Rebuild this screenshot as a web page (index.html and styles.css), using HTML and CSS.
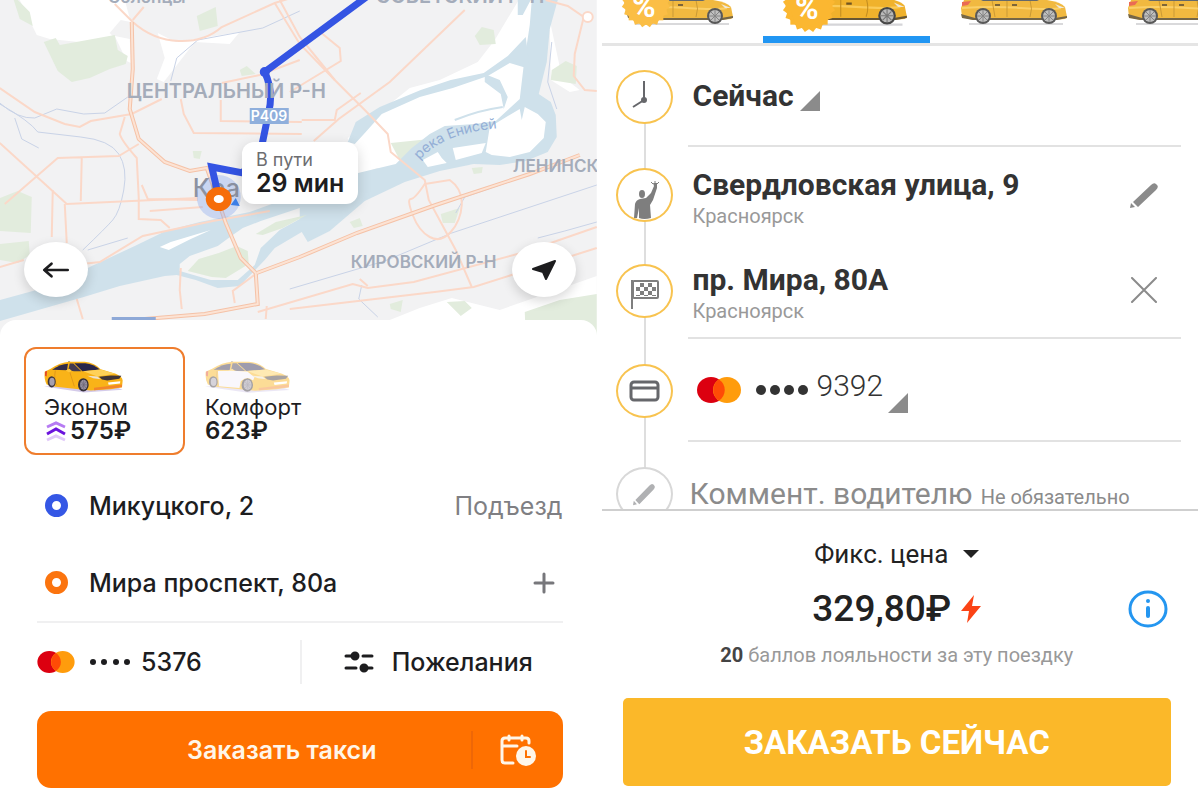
FILE: index.html
```html
<!DOCTYPE html>
<html lang="ru">

<head>
    <meta charset="UTF-8">
    <meta name="viewport" content="width=device-width, initial-scale=1.0">
    <title>Заказ такси</title>
    <link rel="stylesheet" href="styles.css">
</head>

<body>

    <!-- shared drawings -->
    <svg class="sprite" aria-hidden="true">
        <symbol id="mastercard" viewBox="0 0 44 26">
            <ellipse cx="14" cy="13" rx="14" ry="13" fill="#dc0010" />
            <ellipse cx="30" cy="13" rx="14" ry="13" fill="#ff9c0c" />
            <path d="M22 2.500A14 13 0 0 1 22 23.500A14 13 0 0 1 22 2.500Z" fill="#ff4b06" />
        </symbol>
        <symbol id="pencil" viewBox="0 0 28 28">
            <path d="M0 27 1 22 5 26Z" />
            <path d="M3 21 21 4Q24 1 26 3L27 4Q29 6 26 9L8 26Z" />
        </symbol>
        <symbol id="side-car" viewBox="0 0 107 28">
            <path d="M8 24H102" stroke="#d5d5d8" stroke-width="2" />
            <path d="M3 0H86Q100 2 104 7L106 17 104 19 92 20H12L1 17 0 8Z" fill="#f0b22c" />
            <path d="M1 8Q30 6 60 8T100 8" fill="none" stroke="#fbcb58" stroke-width="2" />
            <path d="M0 14 14 18H94L106 16V18L96 20H12L1 18Z" fill="#675633" />
            <path d="M31 0 34 17M69 0Q72 9 69 17M46 0V17" fill="none" stroke="#c58f20" />
            <path d="M20 0H78L76 1H22Z" fill="#55595c" />
            <path d="M34 5H39M51 5H56" stroke="#705523" stroke-width="2" />
            <path d="M1 2 10 1 7 5 1 6Z" fill="#e85c42" />
            <path d="M94 4 104 8 98 8Z" fill="#eee7d8" />
            <circle cx="22" cy="16" r="8" fill="#484848" />
            <circle cx="22" cy="16" r="6" fill="#b9b9b9" />
            <path d="M22 10V22M16 16H28M18 12 26 20M26 12 18 20" stroke="#777" />
            <circle cx="88" cy="16" r="8" fill="#484848" />
            <circle cx="88" cy="16" r="6" fill="#b9b9b9" />
            <path d="M88 10V22M82 16H94M84 12 92 20M92 12 84 20" stroke="#777" />
        </symbol>
        <symbol id="badge" viewBox="-24 -24 48 48">
            <g fill="#fbb731">
                <circle r="20" />
                <rect x="-16" y="-16" width="32" height="32" />
                <rect x="-16" y="-16" width="32" height="32" transform="rotate(18)" />
                <rect x="-16" y="-16" width="32" height="32" transform="rotate(36)" />
                <rect x="-16" y="-16" width="32" height="32" transform="rotate(54)" />
                <rect x="-16" y="-16" width="32" height="32" transform="rotate(72)" />
            </g>
        </symbol>
        <symbol id="taxi" viewBox="0 0 240 95">
            <path d="M0 76 120 94 236 86 190 68Z" fill="#d4cbea" />
            <path d="M2 32 20 23Q48 4 76 2L122 2Q150 4 170 24L215 38Q235 46 236 58L234 78 200 84 140 88 35 77 8 70Q0 56 2 32Z" fill="#f9b318" />
            <path d="M3 32 9 29 8 46 3 44Z" fill="#e44725" />
            <path d="M24 26Q50 8 72 8L69 27Z" fill="#312b49" />
            <path d="M77 7 88 7 112 30 90 30 73 27Z" fill="#443b50" />
            <path d="M91 6 124 6Q149 9 168 25L115 30Z" fill="#29264b" />
            <path d="M118 30 170 25 213 38 160 46Z" fill="#ffd158" />
            <path d="M165 47 200 43 232 44 226 53 190 58 174 55Z" fill="#413536" />
            <path d="M130 44 160 46 170 54 148 51Z" fill="#eee3d0" />
            <path d="M192 64 229 60 228 67 194 71Z" fill="#fff" />
            <path d="M150 80 234 70 234 78 150 87Z" fill="#f3852a" />
            <path d="M34 28Q29 57 38 72M76 28 91 76" fill="none" stroke="#d58a18" stroke-width="2" />
            <path d="M65 28 76 23 83 29 76 34Z" fill="#ffc53b" />
            <path d="M72 2 74-3 79 2Z" fill="#8f8370" />
            <ellipse cx="23" cy="62" rx="12" ry="17" fill="#3b343a" />
            <ellipse cx="24" cy="62" rx="8" ry="12" fill="#a69fae" />
            <ellipse cx="118" cy="71" rx="16" ry="20" fill="#342f38" />
            <ellipse cx="119" cy="71" rx="11" ry="15" fill="#9790a0" />
            <path d="M119 57V85M109 71H129M112 61 126 81M126 61 112 81" stroke="#6c6575" stroke-width="2" />
        </symbol>
    </svg>

    <main class="screens">

        <section class="app city">
            <div class="map">
                <svg class="map-canvas" viewBox="0 0 597 336" preserveAspectRatio="xMidYMin slice" aria-label="Карта">
                    <rect width="597" height="336" fill="#f2f2f3" />
                    <g fill="#fff">
                        <path d="M20 0H125L131 22 121 20 110 33 114 37 79 42 50 39 37 35Z" />
                        <path d="M115 36 130 39 131 63 127 61Z" />
                        <path d="M158 33 176 42 240 32 230 44 195 42 164 82 157 79 165 58Z" />
                        <path d="M519 0 495 40 478 62 440 80 410 88 384 109 350 142 355 165 400 171 460 166 500 160 547 140 548 110 530 95 536 0Z" />
                        <path d="M550 20 551 80 570 92 580 90 562 76Z" />
                        <path d="M390 320 420 308 452 298 500 310 540 296 597 276V336H390Z" />
                        <path d="M348 138 370 122 404 140 402 160 356 175Z" />
                    </g>
                    <g fill="#e2ecdd">
                        <path d="M44 42 56 38 60 45 115 35 118 50 128 56 126 64 110 69 90 78 72 82 58 71Z" />
                        <path d="M18 0 30 12 33 26 20 19 14 0Z" />
                        <path d="M197 16 216 7 218 26 200 31Z" />
                        <path d="M240 70 247 66 256 74 242 76Z" />
                        <path d="M193 151 202 151 200 159 194 158Z" />
                        <path d="M0 198 18 191 32 197 31 233 0 231Z" />
                        <path d="M0 244 29 241 30 255 18 263 0 260Z" />
                        <path d="M475 36 482 27 494 30 496 44 480 45Z" />
                        <path d="M552 70 566 61 577 66 576 84 551 80Z" />
                        <path d="M391 143 430 139 417 161 402 164Z" />
                        <path d="M441 214 460 208 455 223 443 223Z" />
                        <path d="M447 302 465 301 472 308 461 316Z" />
                        <path d="M525 312 560 300 597 294V336H526Z" />
                        <path d="M390 304 403 300 401 312 391 309Z" />
                        <path d="M472 168 483 167 482 173 474 174ZM350 222 360 218 363 226 354 228Z" />
                    </g>

                    <!-- Yenisei -->
                    <g fill="#cfe1eb">
                        <path d="M0 300 55 285 92 266 135 246 166 231 200 222 250 212 310 190 350 175 396 164 412 148 430 134 445 126 475 124 496 121 520 99 524 65 530 25 532 0H558L550 29 547 62 539 94 551 102 556 115 557 137 548 152 526 161 500 165 474 164 440 171 405 182 365 201 330 231 308 242 302 232 275 248 265 260 240 286 218 288 196 280 177 275 165 276 120 286 84 297 0 321Z" />
                        <path d="M348 142 356 122 380 107 421 90 451 80 484 73 508 56 526 37 530 69 510 63 488 76 453 88 420 97 382 114 366 132 355 144Z" />
                        <path d="M485 74 500 80 508 97 504 109 501 94 485 82Z" />
                        <path d="M441 150 452 144 451 161 447 159Z" />
                        <path d="M518 0 531 0 523 15 518 15Z" />
                    </g>
                    <g fill="#fff">
                        <path d="M423 160 438 152 442 158 447 163 428 167Z" />
                        <path d="M453 148 486 143 482 153 456 160Z" />
                        <path d="M490 127 520 109 522 120 525 107 538 114 546 122 544 138 530 152 510 157 492 155 486 152Z" />
                        <path d="M171 242 211 230 191 239 169 250 160 247Z" />
                    </g>
                    <path d="M180 264 190 256 218 246 233 235 243 228 261 221 300 208 300 219 280 230 261 248 255 265 238 280 211 280 180 271Z" fill="#f5f5f5" />
                    <path d="M188 271 199 259 219 253 237 246 248 251 249 264 226 278 212 277ZM256 234 276 222 307 215 283 228 263 235Z" fill="#e0ebdb" />
                    <path d="M455 120Q480 110 503 107" fill="none" stroke="#cfe1eb" stroke-width="2" />

                    <!-- railways and streams -->
                    <g fill="none" stroke="#c9d3e7">
                        <path d="M0 103Q18 119 35 118L57 109 84 114 105 113 128 97" />
                        <path d="M0 104Q30 121 38 132L81 137Q110 140 119 154T124 190 113 220 83 250" />
                        <path d="M15 118 22 139 39 148M171 81 177 58 198 40 263 28 300 11M456 213 465 197 512 181" />
                        <path d="M290 289 385 261 452 233 597 185M88 250 128 238M362 285 359 299 378 317" />
                        <path d="M552 42 548 82 557 109M538 238 565 231 597 222" />
                    </g>

                    <!-- roads -->
                    <g fill="none" stroke="#fbd8c8" stroke-width="2">
                        <path d="M115 4 133 22Q153 40 179 41T222 27L275 3 350-20M133 20 144 7M275 3 300 44 335 80 366 111 388 134 391 152 425 180 429 200 456 250 472 287" />
                        <path d="M0 88 35 112 65 124 80 127 91 121 132 114 162 99M0 143 55 193 67 204 198 198M5 204 58 158 119 156 139 144M82 158 81 201M53 190 52 237M65 204 67 243" />
                        <path d="M125 117 120 134Q122 141 137 158L139 198V219L161 220 170 228M142 185 148 199 198 200M150 211 203 207M181 99 184 114 194 133 302 134M221 100 221 121 302 122M222 83 260 75 300 60" />
                        <path d="M280 0 300 37 335 80M318 30 340 48 341 61 290 92M465 10 390 82 339 119 314 141M302 120H335L337 110 361 93" />
                        <path d="M56 267 100 262 143 236 213 221 270 211M181 268 180 290 182 309M0 267 24 260M77 299 83 319M235 303 233 291 256 274M267 306 266 319" />
                        <path d="M425 184 450 180Q463 189 462 205T451 232 430 237 413 215 411 199 425 184ZM258 312 353 284 368 288 414 282 525 252 597 227M290 309 435 292 474 287 597 248M368 286 360 279" />
                        <path d="M546 0 568 6 584 17 575 54 574 76 585 90 597 91" />
                    </g>
                    <g fill="none" stroke="#f5c2a7" stroke-width="4">
                        <path d="M132 22 133 69 130 109 139 139 165 162 190 171 207 168 214 188 226 223 241 258 256 273 258 304 205 314 145 319" />
                        <path d="M257 273 300 257 357 233 436 205 530 174 580 155" />
                    </g>
                    <g fill="none" stroke="#fce3d4" stroke-width="2">
                        <path d="M132 22 133 69 130 109 139 139 165 162 190 171 207 168 214 188 226 223 241 258 256 273 258 304 205 314 145 319" />
                        <path d="M257 273 300 257 357 233 436 205 530 174 580 155" />
                    </g>
                    <circle cx="588" cy="17" r="5" fill="#fff" stroke="#fbd8c8" stroke-width="2" />
                    <rect x="112" y="317" width="44" height="5" fill="#8ea9d7" />

                    <circle cx="219" cy="197" r="22" fill="#6c94f0" fill-opacity=".3" />
                    <g class="map-labels">
                        <text x="108" y="3" class="town">Солонцы</text>
                        <text x="376" y="3" class="soviet">СОВЕТСКИЙ Р-Н</text>
                        <text x="351" y="268">КИРОВСКИЙ Р-Н</text>
                        <text x="513" y="172">ЛЕНИНСК</text>
                        <text x="193" y="197" class="capital">Кра</text>
                        <path id="river-line" d="M420 160Q443 133 500 128" fill="none" />
                        <text class="river"><textPath href="#river-line">река Енисей</textPath></text>
                    </g>

                    <!-- route -->
                    <path d="M368-4 265 72Q274 92 269 112L262 146 243 173 212 167 219 197" fill="none" stroke="#3454e3" stroke-width="7" />
                    <circle cx="265" cy="72" r="5" fill="#3454e3" />
                    <g class="map-labels">
                        <text x="127" y="98" class="district">ЦЕНТРАЛЬНЫЙ Р-Н</text>
                    </g>
                    <rect x="250" y="108" width="39" height="16" fill="#8fafdc" />
                    <text x="251" y="121" class="road-sign">Р409</text>
                    <path d="M231 205 236 198 240 206Z" fill="#3c7fe9" />
                    <ellipse cx="219" cy="199" rx="9" ry="8" fill="#fff" stroke="#f66d0a" stroke-width="8" />
                </svg>

                <div class="eta">
                    <span>В пути</span>
                    <strong>29 мин</strong>
                </div>
                <button class="map-button back" aria-label="Назад">
                    <svg width="28" height="18" viewBox="0 0 30 20" fill="none" stroke="#1d1d1f" stroke-width="3" stroke-linecap="round" stroke-linejoin="round">
                        <path d="M28 10H2M10 3 2 10 10 17" />
                    </svg>
                </button>
                <button class="map-button locate" aria-label="Моё местоположение">
                    <svg width="24" height="20" viewBox="0 0 24 20" fill="#1d1d1f" stroke="#1d1d1f" stroke-width="2" stroke-linejoin="round">
                        <path d="M1 9 23 1 14 19 11 12Z" />
                    </svg>
                </button>
            </div>

            <div class="sheet">
                <div class="tariffs">
                    <button class="tariff selected">
                        <svg class="taxi"><use href="#taxi" /></svg>
                        <span class="tariff-name">Эконом</span>
                        <span class="tariff-price">
                            <svg width="24" height="22" viewBox="0 0 24 22" fill="none" stroke-width="3">
                                <path d="M3 7 12 3 21 7" stroke="#b67bf3" />
                                <path d="M3 14 12 9 21 14" stroke="#6b13dd" />
                                <path d="M3 20 12 16 21 20" stroke="#e1c9fa" />
                            </svg>
                            575₽
                        </span>
                    </button>
                    <button class="tariff">
                        <svg class="taxi faded" viewBox="0 0 240 95" preserveAspectRatio="none">
                            <use href="#taxi" width="240" height="95" />
                            <path d="M36 30 74 29 118 31 138 48 134 58Q119 42 100 60L96 80 39 75Z" fill="#f3effa" />
                        </svg>
                        <span class="tariff-name">Комфорт</span>
                        <span class="tariff-price">623₽</span>
                    </button>
                </div>

                <div class="address">
                    <span class="dot from"></span>
                    <input type="text" value="Микуцкого, 2" aria-label="Откуда">
                    <button class="entrance">Подъезд</button>
                </div>
                <div class="address">
                    <span class="dot to"></span>
                    <input type="text" value="Мира проспект, 80а" aria-label="Куда">
                    <button class="add" aria-label="Добавить адрес">
                        <svg width="22" height="22" viewBox="0 0 22 22" stroke="#77777b" stroke-width="3" stroke-linecap="round">
                            <path d="M11 2V20M2 11H20" />
                        </svg>
                    </button>
                </div>

                <div class="options">
                    <button class="option card">
                        <svg width="38" height="22"><use href="#mastercard" /></svg>
                        <svg width="42" height="8" viewBox="0 0 42 8" fill="#1d1d1f">
                            <circle cx="4" cy="4" r="3" /><circle cx="15" cy="4" r="3" /><circle cx="27" cy="4" r="3" /><circle cx="38" cy="4" r="3" />
                        </svg>
                        <span>5376</span>
                    </button>
                    <button class="option wishes">
                        <svg width="30" height="22" viewBox="0 0 30 22" fill="#1d1d1f" stroke="#1d1d1f" stroke-width="3" stroke-linecap="round">
                            <path d="M2 5H10M19 5H28M2 17H12M20 17H28" />
                            <circle cx="11" cy="5" r="3" /><circle cx="20" cy="17" r="3" />
                        </svg>
                        <span>Пожелания</span>
                    </button>
                </div>

                <div class="order">
                    <button class="order-now">Заказать такси</button>
                    <button class="order-later" aria-label="Заказать на время">
                        <svg width="36" height="32" viewBox="0 0 36 32" fill="none" stroke="#fff6e9" stroke-width="3" stroke-linecap="round">
                            <path d="M29 9V7Q29 4 26 4H5Q2 4 2 7V26Q2 29 5 29H13M2 12H17M9 2V6M22 2V6" />
                            <circle cx="26" cy="22" r="10" fill="#fff6e9" stroke="none" />
                            <path d="M26 17V23H30" stroke="#ff7100" stroke-width="2" />
                        </svg>
                    </button>
                </div>
            </div>
        </section>

        <section class="app maxim">
            <nav class="classes">
                <button class="class" aria-label="Эконом">
                    <svg viewBox="0 0 167 36">
                        <use href="#side-car" x="31" y="0" width="107" height="28" />
                        <use href="#badge" x="24" y="-23" width="52" height="52" />
                        <text x="36" y="17" class="percent">%</text>
                    </svg>
                </button>
                <button class="class active" aria-label="Комфорт">
                    <svg viewBox="0 0 167 36">
                        <use href="#side-car" x="27" y="-2" width="118" height="31" />
                        <use href="#badge" x="18" y="-22" width="56" height="56" />
                        <text x="32" y="19" class="percent">%</text>
                    </svg>
                </button>
                <button class="class" aria-label="Бизнес">
                    <svg viewBox="0 0 167 36"><use href="#side-car" x="31" y="0" width="107" height="28" /></svg>
                </button>
                <button class="class" aria-label="Универсал">
                    <svg viewBox="0 0 167 36"><use href="#side-car" x="31" y="0" width="107" height="28" /></svg>
                </button>
            </nav>

            <div class="steps">
                <div class="step">
                    <span class="step-icon">
                        <svg width="44" height="44" viewBox="0 0 44 44" fill="none" stroke="#66676b" stroke-width="2">
                            <path d="M22 6V25L11 32" />
                            <circle cx="22" cy="25" r="2" fill="#66676b" />
                        </svg>
                    </span>
                    <div class="step-body line">
                        <select class="when" aria-label="Время подачи">
                            <option>Сейчас</option>
                        </select>
                        <svg class="corner" width="20" height="20"><path d="M20 0V20H0Z" fill="#8b8b8b" /></svg>
                    </div>
                </div>

                <div class="step">
                    <span class="step-icon">
                        <svg width="44" height="52" viewBox="0 0 44 52" fill="#7e7e7e">
                            <ellipse cx="20" cy="25" rx="3" ry="4" />
                            <path d="M12 49 13 35Q14 31 18 30L24 29 29 24 32 17 31 14 35 14 35 19 31 31 28 36 29 49Q22 51 17 49L17 39 15 49Z" />
                            <path d="M31 15 29 13M33 15V12M35 15 37 13" stroke="#7e7e7e" />
                        </svg>
                    </span>
                    <div class="step-body">
                        <div class="place">
                            <strong>Свердловская улица, 9</strong>
                            <span>Красноярск</span>
                        </div>
                        <button class="step-action" aria-label="Изменить адрес">
                            <svg width="28" height="28" fill="#8b8b8b"><use href="#pencil" /></svg>
                        </button>
                    </div>
                </div>

                <div class="step">
                    <span class="step-icon">
                        <svg width="44" height="44" viewBox="0 0 44 44" fill="#7e7e7e">
                            <path d="M9 11H11V40H9Z" />
                            <rect x="11" y="12" width="25" height="17" rx="1" fill="none" stroke="#7e7e7e" stroke-width="2" />
                            <path d="M18 14H22V18H18ZM26 14H30V18H26ZM14 18H18V22H14ZM22 18H26V22H22ZM30 18H34V22H30ZM18 22H22V26H18ZM26 22H30V26H26ZM14 26H18V27H14ZM22 26H26V27H22ZM30 26H34V27H30Z" />
                        </svg>
                    </span>
                    <div class="step-body line">
                        <div class="place">
                            <strong>пр. Мира, 80А</strong>
                            <span>Красноярск</span>
                        </div>
                        <button class="step-action" aria-label="Удалить адрес">
                            <svg width="28" height="26" viewBox="0 0 28 26" stroke="#8b8b8b" stroke-width="2" stroke-linecap="round">
                                <path d="M2 1 26 25M26 1 2 25" />
                            </svg>
                        </button>
                    </div>
                </div>

                <div class="step">
                    <span class="step-icon">
                        <svg width="44" height="44" viewBox="0 0 44 44" fill="none" stroke="#66676b" stroke-width="3">
                            <rect x="9" y="13" width="27" height="18" rx="3" />
                            <path d="M9 19H36" />
                        </svg>
                    </span>
                    <div class="step-body line">
                        <button class="payment">
                            <svg width="44" height="26"><use href="#mastercard" /></svg>
                            <svg width="54" height="12" viewBox="0 0 54 12" fill="#333">
                                <circle cx="6" cy="6" r="5" /><circle cx="20" cy="6" r="5" /><circle cx="34" cy="6" r="5" /><circle cx="48" cy="6" r="5" />
                            </svg>
                            <span>9392</span>
                        </button>
                        <svg class="corner low" width="20" height="20"><path d="M20 0V20H0Z" fill="#8b8b8b" /></svg>
                    </div>
                </div>

                <div class="step">
                    <span class="step-icon muted">
                        <svg width="22" height="24" viewBox="0 0 28 28" preserveAspectRatio="none" fill="#b0b1b3"><use href="#pencil" width="28" height="28" /></svg>
                    </span>
                    <div class="step-body comment">
                        <label for="comment">Коммент. водителю</label>
                        <input type="text" id="comment" placeholder="Не обязательно">
                    </div>
                </div>
            </div>

            <div class="total">
                <div class="price-kind">
                    <select aria-label="Тип цены">
                        <option>Фикс. цена</option>
                    </select>
                    <svg width="16" height="8"><path d="M0 0H16L8 8Z" fill="#222" /></svg>
                </div>
                <div class="price-row">
                    <p class="price">
                        329,80₽
                        <svg width="20" height="28" viewBox="0 0 20 28"><path d="M13 0 0 16H8L6 28 20 11H11Z" fill="#fb4315" /></svg>
                    </p>
                    <button class="info" aria-label="О цене">
                        <svg width="40" height="38" viewBox="0 0 40 38" fill="none" stroke="#2496f0">
                            <ellipse cx="20" cy="19" rx="18" ry="17" stroke-width="3" />
                            <path d="M20 18V26" stroke-width="4" stroke-linecap="round" />
                            <circle cx="20" cy="11" r="2" fill="#2496f0" stroke="none" />
                        </svg>
                    </button>
                </div>
                <p class="bonus"><b>20</b> баллов лояльности за эту поездку</p>
                <button class="submit">ЗАКАЗАТЬ СЕЙЧАС</button>
            </div>
        </section>

    </main>

</body>

</html>
```

FILE: styles.css
```css
* {
    box-sizing: border-box;
}

body {
    margin: 0;
    background-color: #fff;
    color: #1d1d1f;
    font-family: Inter, sans-serif;
}

button,
input,
select {
    font: inherit;
    color: inherit;
    background: none;
    border: none;
    padding: 0;
    margin: 0;
}

button {
    cursor: pointer;
}

select {
    appearance: none;
}

p {
    margin: 0;
}

svg {
    flex-shrink: 0;
}

.sprite {
    position: absolute;
    width: 0;
    height: 0;
}

.screens {
    display: grid;
    grid-template-columns: 1fr 1fr;
    gap: 5px;
    min-height: 100vh;
    padding-right: 2px;
}

.app {
    display: flex;
    flex-direction: column;
    min-width: 0;
}

/* left screen */

.map {
    position: relative;
    height: 336px;
    overflow: hidden;
}

.map-canvas {
    display: block;
    width: 100%;
    height: 100%;
}

.map-labels {
    fill: #a4acba;
    font-size: 17px;
    font-weight: 600;
}

.map-labels .soviet {
    font-size: 20px;
}

.map-labels .district {
    font-size: 20px;
}

.map-labels .capital {
    fill: #8c92a2;
    font-size: 25px;
    font-weight: 500;
}

.map-labels .river {
    fill: #93aed6;
    font-size: 14px;
    font-weight: 400;
}

.road-sign {
    fill: #fff;
    font-size: 14px;
    font-weight: 600;
}

.eta {
    position: absolute;
    top: 142px;
    left: 242px;
    display: flex;
    flex-direction: column;
    padding: 8px 14px;
    border-radius: 12px;
    background-color: #fff;
    box-shadow: 0 4px 14px rgba(0, 0, 0, 0.16);
    font-size: 18px;
    line-height: 20px;
    color: #6d6d70;
}

.eta strong {
    font-size: 25px;
    font-weight: 600;
    line-height: 26px;
    color: #1d1d1f;
}

.map-button {
    position: absolute;
    top: 242px;
    display: flex;
    align-items: center;
    justify-content: center;
    width: 64px;
    height: 55px;
    border-radius: 50%;
    background-color: #fff;
    box-shadow: 0 4px 12px rgba(0, 0, 0, 0.16);
}

.back {
    left: 24px;
}

.locate {
    right: 21px;
}

.sheet {
    position: relative;
    flex: 1;
    display: flex;
    flex-direction: column;
    margin-top: -16px;
    padding: 27px 34px 12px 37px;
    border-radius: 16px 16px 0 0;
    background-color: #fff;
    font-size: 25px;
    font-weight: 500;
}

.tariffs {
    display: flex;
    margin-left: -13px;
    margin-bottom: 12px;
}

.tariff {
    display: flex;
    flex-direction: column;
    align-items: flex-start;
    width: 161px;
    height: 108px;
    padding: 12px 18px;
    border: 2px solid transparent;
    border-radius: 12px;
}

.tariff.selected {
    border-color: #ef7d2d;
}

.taxi {
    width: 80px;
    height: 32px;
    margin-bottom: 2px;
}

.taxi.faded {
    width: 86px;
    opacity: 0.45;
}

.tariff-name {
    font-size: 22px;
    font-weight: 400;
    line-height: 24px;
}

.tariff-price {
    display: flex;
    align-items: center;
    gap: 2px;
    font-size: 24px;
    font-weight: 600;
    line-height: 24px;
}

.address {
    display: flex;
    align-items: center;
    height: 77px;
    padding-left: 8px;
}

.address input {
    flex: 1;
    min-width: 0;
    margin-left: 21px;
}

.dot {
    width: 23px;
    height: 23px;
    border: 7px solid #3557e5;
    border-radius: 50%;
}

.dot.to {
    border-color: #fb740f;
}

.entrance {
    color: #7f7f83;
    font-size: 25px;
    font-weight: 400;
}

.add {
    display: flex;
    padding: 8px;
}

.options {
    display: flex;
    align-items: center;
    height: 80px;
    margin-bottom: 10px;
    border-top: 2px solid #f0f0f1;
}

.option {
    flex: 0 0 50%;
    display: flex;
    align-items: center;
    height: 44px;
}

.card svg {
    margin-right: 14px;
}

.card svg + svg {
    margin-right: 10px;
}

.wishes {
    gap: 18px;
    padding-left: 42px;
    border-left: 2px solid #f0f0f1;
}

.order {
    display: flex;
    align-items: center;
    height: 77px;
    border-radius: 14px;
    background-color: #ff7100;
    color: #fff6e9;
}

.order-now {
    flex: 1;
    height: 100%;
    padding-left: 56px;
    font-weight: 600;
}

.order-later {
    display: flex;
    align-items: center;
    justify-content: center;
    width: 92px;
    height: 38px;
    border-left: 2px solid #ee6707;
}

/* right screen */

.maxim {
    font-family: Roboto, sans-serif;
    color: #222;
}

.classes {
    display: flex;
    height: 46px;
    overflow: hidden;
    border-bottom: 3px solid #e5e5e5;
}

.class {
    flex: 0 0 28%;
    display: flex;
    align-items: flex-start;
    height: 44px;
}

.class:first-child {
    margin-left: -1%;
}

.class svg {
    width: 100%;
}

.class.active {
    border-bottom: 8px solid #2196f3;
}

.class:not(.active) svg {
    opacity: 0.9;
}

.percent {
    fill: #fff;
    font-size: 32px;
    font-weight: 700;
}

.steps {
    height: 465px;
    overflow: hidden;
    border-bottom: 2px solid #cfcfcf;
}

.step {
    display: flex;
    align-items: center;
    height: 96px;
    padding: 0 17px 0 14px;
    background: linear-gradient(#dedede, #dedede) 42px 0 / 2px 100% no-repeat;
}

.step:first-child {
    height: 101px;
    background-position: 42px 100%;
    background-size: 2px 50%;
}

.step:nth-child(n + 4) {
    height: 103px;
}

.step-icon {
    flex-shrink: 0;
    display: flex;
    align-items: center;
    justify-content: center;
    width: 57px;
    height: 54px;
    border: 2px solid #f8c34f;
    border-radius: 50%;
    background-color: #fff;
}

.step-icon.muted {
    border-color: #d8d8d8;
}

.step-body {
    flex: 1;
    display: flex;
    align-items: center;
    height: 100%;
    margin-left: 15px;
    padding-left: 5px;
}

.step-body.line {
    border-bottom: 2px solid #e2e2e2;
}

.when {
    font-size: 30px;
    font-weight: 700;
    color: #333;
}

.corner {
    margin-top: 10px;
    margin-left: 5px;
}

.corner.low {
    margin-top: 26px;
}

.place {
    flex: 1;
    display: flex;
    flex-direction: column;
    padding-top: 5px;
}

.place strong {
    font-size: 30px;
    line-height: 36px;
    color: #333;
}

.place span {
    font-size: 20px;
    line-height: 26px;
    color: #999;
}

.step-action {
    display: flex;
    margin-right: 23px;
}

.payment {
    display: flex;
    align-items: center;
    padding-left: 4px;
    font-size: 30px;
    font-weight: 300;
    color: #333;
}

.payment span {
    padding-bottom: 8px;
}

.payment svg {
    margin-right: 14px;
}

.payment svg + svg {
    margin-right: 8px;
}

.comment {
    align-items: baseline;
    padding-top: 34px;
    padding-left: 2px;
    gap: 8px;
    font-size: 30px;
    color: #8b8b8b;
}

.comment input {
    flex: 1;
    min-width: 0;
    font-size: 20px;
}

.comment input::placeholder {
    color: #8b8b8b;
}

.total {
    flex: 1;
    display: flex;
    flex-direction: column;
    padding: 26px 27px 14px 21px;
    text-align: center;
}

.price-kind {
    display: flex;
    align-items: center;
    justify-content: center;
    gap: 14px;
    height: 34px;
    font-size: 26px;
}

.price-row {
    display: grid;
    grid-template-columns: 1fr auto 1fr;
    align-items: center;
    height: 75px;
}

.price {
    grid-column: 2;
    display: flex;
    align-items: center;
    gap: 10px;
    font-size: 37px;
    font-weight: 500;
}

.info {
    display: flex;
    justify-self: end;
    margin-right: 3px;
}

.bonus {
    font-size: 20px;
    line-height: 18px;
    color: #999;
}

.bonus b {
    color: #444;
}

.submit {
    height: 88px;
    margin-top: auto;
    border-radius: 5px;
    background-color: #fbb829;
    color: #fff;
    font-size: 33px;
    font-weight: 700;
}
```
